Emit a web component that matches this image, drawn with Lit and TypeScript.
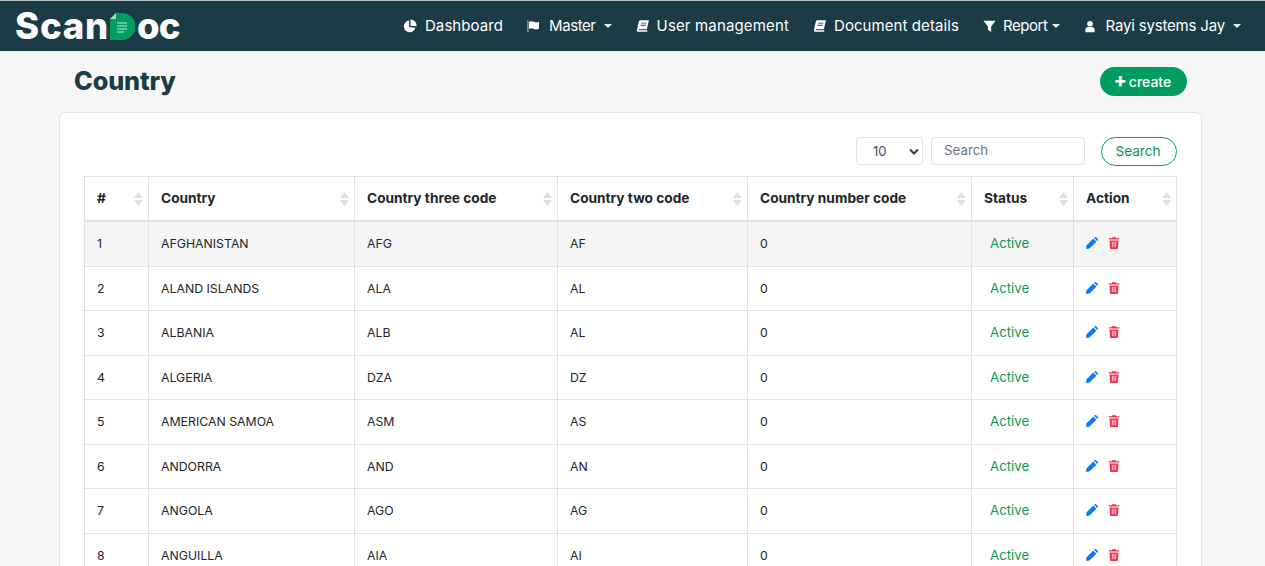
import { LitElement, html, css, svg } from "lit";
import { customElement } from "lit/decorators.js";

const rows = [
  ["1", "AFGHANISTAN", "AFG", "AF", "0"],
  ["2", "ALAND ISLANDS", "ALA", "AL", "0"],
  ["3", "ALBANIA", "ALB", "AL", "0"],
  ["4", "ALGERIA", "DZA", "DZ", "0"],
  ["5", "AMERICAN SAMOA", "ASM", "AS", "0"],
  ["6", "ANDORRA", "AND", "AN", "0"],
  ["7", "ANGOLA", "AGO", "AG", "0"],
  ["8", "ANGUILLA", "AIA", "AI", "0"],
];
const cols = ["#", "Country", "Country three code", "Country two code", "Country number code", "Status", "Action"];

const ico = (cls: string, vb: string, d: unknown) =>
  html`<svg class=${cls} viewBox=${vb} fill="currentColor">${d}</svg>`;
const pie = () => ico("ni i-pie", "0 0 16 16", svg`<path d="M7 1.800a6.700 6.700 0 1 0 7.100 8.300L7 9.200z"/><path d="M8.600 .6v7l7 .6A7.200 7.200 0 0 0 8.600 .6z"/>`);
const flag = () => ico("ni i-flag", "0 0 16 16", svg`<rect x="0.300" y="1.500" width="1.400" height="13.500" opacity=".55"/><path d="M2.300 3.200c2-1 3.700-.8 5.500 0s3.700 1 5.900 0v8c-2.100 1-4 .9-5.900 0s-3.500-1-5.500 0z"/>`);
const book = () => ico("ni i-book", "0 0 16 16", svg`<path d="M5.200 1.500h9.600l-2.400 10.200H4c-.9 0-1.200.8-1.300 1.100h10.400l-.3 1.700H2.400c-1.200 0-1.600-1-1.300-2.300l2-8.900c.2-1 1-1.800 2.100-1.800zm.8 2.700-.2 1h6l.2-1zm-.6 2.500-.2 1h6l.2-1z" fill-rule="evenodd"/>`);
const funnel = () => ico("ni i-fun", "0 0 16 16", svg`<path d="M.5 1.500h15L10 8.500V15.500L6 12.500V8.500z"/>`);
const user = () => ico("ni i-user", "0 0 16 16", svg`<circle cx="8" cy="4.300" r="3.800"/><path d="M1.800 15.500v-3C1.800 10.300 3.500 8.800 5.200 8.800h5.600c1.700 0 3.400 1.500 3.400 3.700v3z"/>`);
const pencil = () => ico("act pen", "0 0 12 12", svg`<path d="M.4 8.500 7.300 1.600l3.100 3.100-6.900 6.900-3.400.4zM8.100 .8 8.800.2c.4-.3.900-.3 1.300 0l1.700 1.700c.3.4.3.9 0 1.300l-.6.7z"/>`);
const trash = () => ico("act bin", "0 0 12 12", svg`<path fill-rule="evenodd" d="M4.200.2h3.600l.5 1H11.200v1.400H.8V1.200h2.900zM1.500 3.400h9l-.5 7.600c0 .5-.4.900-.9.900H2.900c-.5 0-.9-.4-.9-.9zm2.400 1.400v5.400h.7V4.800zm1.750 0v5.400h.7V4.800zm1.750 0v5.400h.7V4.800z"/>`);

@customElement("app-root")
export class AppRoot extends LitElement {
  static styles = css`
    :host { display: block; height: 566px; overflow: hidden; background: #f6f6f6; font-family: "Inter", "Liberation Sans", sans-serif; color: #212529; }
    .nav { height: 50px; margin-top: 1px; background: #1b3b46; display: flex; align-items: center; justify-content: space-between; padding: 0 24px 0 15px; box-shadow: 0 -1px 0 #b9c2c5; }
    .logo { display: flex; align-items: center; color: #fff; font: 800 36.500px/1 "Inter", sans-serif; }
    .scan { letter-spacing: .8px; }
    .oc { letter-spacing: -.8px; }
    .logo svg { width: 25px; height: 27px; margin: 0 2px 0 1px; }
    .links { display: flex; align-items: center; gap: 24px; color: #fff; font-size: 15px; line-height: 20px; }
    .link { display: flex; align-items: center; white-space: nowrap; letter-spacing: .08px; }
    .ls-master { letter-spacing: -.42px; }
    .ls-report { letter-spacing: -.42px; }
    .ls-user { letter-spacing: -.18px; }
    .ls-mgmt { letter-spacing: .15px; }
    .ni { width: 14px; height: 14px; margin-right: 8px; flex: none; }
    .i-flag { margin-right: 8px; }
    .i-book { margin-right: 7px; }
    .i-fun { width: 13px; margin-right: 7px; }
    .i-user { width: 12px; height: 13px; margin-right: 10px; }
    .caret { width: 0; height: 0; border-left: 4px solid transparent; border-right: 4px solid transparent; border-top: 4px solid #fff; margin-left: 8px; }
    .tight .caret { margin-left: 4px; }
    .head { box-sizing: border-box; display: flex; align-items: center; justify-content: space-between; padding: 16px 78px 0 74px; height: 45px; }
    h1 { margin: 0; font-size: 25.200px; font-weight: 800; color: #1b3b46; letter-spacing: -.1px; line-height: 29px; }
    .create { height: 29px; width: 87px; box-sizing: border-box; border: 0; border-radius: 15px; background: #019d60; color: #fff; font: 500 14px "Inter", sans-serif; display: flex; align-items: center; justify-content: center; gap: 2px; padding: 0 2px 1px 0; }
    .create b { font-size: 19px; font-weight: 800; line-height: 1; margin-top: -2px; }
    .card { margin: 16px 63px 0 59px; background: #fff; border: 1px solid #e1e4ea; border-radius: 6px; padding: 24px 24px 0; height: 600px; box-sizing: border-box; }
    .tools { display: flex; justify-content: flex-end; align-items: flex-start; height: 29px; margin-bottom: 10px; }
    .sel { width: 67px; height: 28px; box-sizing: border-box; border: 1px solid #dee2e6; border-radius: 4px; font-size: 13px; color: #495057; display: flex; align-items: center; justify-content: space-between; padding: 0 3px 0 16px; }
    .sel svg { width: 10px; height: 7px; }
    .inp { width: 154px; height: 28px; box-sizing: border-box; margin-left: 8px; border: 1px solid #dee2e6; border-radius: 4px; font-size: 13.300px; color: #6c757d; display: flex; align-items: center; padding: 0 12px 2px; }
    .sbtn { width: 76px; height: 29px; box-sizing: border-box; margin-left: 16px; border: 1px solid #019d60; border-radius: 15px; background: #fff; color: #0b8f5d; font-size: 13.600px; display: flex; align-items: center; justify-content: center; padding: 0 2px 2px 0; }
    table { border-collapse: collapse; table-layout: fixed; width: 1092px; font-size: 12.300px; }
    th, td { border: 1px solid #dee2e6; padding: 0 12px; text-align: left; white-space: nowrap; overflow: hidden; }
    th { height: 41px; padding-bottom: 2px; font-size: 13.700px; font-weight: 700; color: #212529; position: relative; border-bottom-width: 2px; }
    td { height: 43.500px; color: #212529; }
    .cell { display: block; }
    .active .cell { padding-bottom: 1px; }
    tbody tr:first-child td { background: #f5f5f5; }
    .s { position: absolute; right: 5px; top: 14px; width: 9px; height: 16px; }
    .active { color: #0d9b52; font-size: 13.300px; padding-left: 18px; }
    .acts { display: flex; align-items: center; gap: 10px; padding-bottom: 1px; }
    .act { width: 12px; height: 12px; }
    .pen { color: #0d7bf0; } .bin { color: #e8344e; }
  `;

  render() {
    const widths = [64, 206, 203, 190, 224, 102, 103];
    return html`
      <div class="nav">
        <div class="logo"><span class="scan">Scan</span><svg viewBox="0 0 25 27"><path d="M6 0h6a13.500 13.500 0 0 1 0 27H0V6z" fill="#019d60"/><path d="M6 0v6H0z" fill="#a9d9c3"/><path d="M7 10h10M7 13h10M7 16h10M7 19h7" stroke="#bfe9d3" stroke-width="1"/></svg><span class="oc">oc</span></div>
        <div class="links">
          <div class="link">${pie()}Dashboard</div>
          <div class="link ls-master">${flag()}Master<span class="caret"></span></div>
          <div class="link ls-mgmt">${book()}User management</div>
          <div class="link">${book()}Document details</div>
          <div class="link tight ls-report">${funnel()}Report<span class="caret"></span></div>
          <div class="link ls-user">${user()}Rayi systems Jay<span class="caret"></span></div>
        </div>
      </div>
      <div class="head"><h1>Country</h1><button class="create"><b>+</b>create</button></div>
      <div class="card">
        <div class="tools">
          <div class="sel">10<svg viewBox="0 0 10 7"><path d="M1 1.500 5 5.500 9 1.500" fill="none" stroke="#343a40" stroke-width="2"/></svg></div>
          <div class="inp">Search</div>
          <div class="sbtn">Search</div>
        </div>
        <table>
          <colgroup>${widths.map((w) => html`<col style="width:${w}px" />`)}</colgroup>
          <thead><tr>${cols.map((c) => html`<th>${c}<svg class="s" viewBox="0 0 9 16"><path d="M4.500 1 9 7H0zM4.500 15 0 9h9z" fill="#dcdfe3"/></svg></th>`)}</tr></thead>
          <tbody>
            ${rows.map((r) => html`<tr>${r.map((v) => html`<td><span class="cell">${v}</span></td>`)}<td class="active"><span class="cell">Active</span></td><td><div class="acts">${pencil()}${trash()}</div></td></tr>`)}
          </tbody>
        </table>
      </div>
    `;
  }
}
